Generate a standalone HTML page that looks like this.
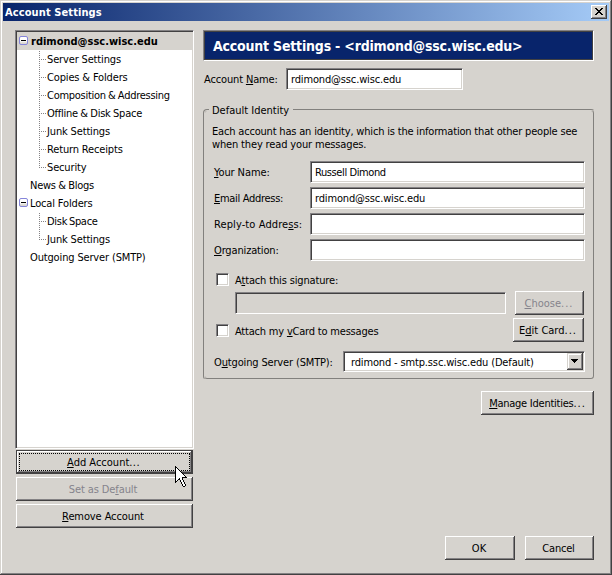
<!DOCTYPE html>
<html>
<head>
<meta charset="utf-8">
<title>Account Settings</title>
<style>
html,body{margin:0;padding:0;}
body{width:612px;height:575px;overflow:hidden;background:#d6d3ce;position:relative;
 font-family:"DejaVu Sans Condensed","Liberation Sans",sans-serif;font-size:11px;line-height:13px;color:#000;cursor:default;}
.abs,.t,.btn,.inp,.row{position:absolute;}
.t{white-space:nowrap;height:13px;letter-spacing:-0.15px;}
.b{font-family:"DejaVu Sans Condensed","Liberation Sans",sans-serif;font-weight:bold;letter-spacing:0;}
u{text-decoration:underline;text-underline-offset:1px;text-decoration-thickness:1px;}
#frame{left:0;top:0;width:612px;height:575px;box-sizing:border-box;
 box-shadow:inset -1px -1px #424142, inset 1px 1px #d6d3ce, inset -2px -2px #848284, inset 2px 2px #fff;}
#titlebar{left:3px;top:3px;width:606px;height:18px;background:linear-gradient(to right,#08246b 0%,#a5cbf7 100%);}
#titletext{left:5px;top:6px;color:#fff;letter-spacing:0.1px;}
.btn{background:#d6d3ce;box-sizing:border-box;text-align:center;white-space:nowrap;
 box-shadow:inset -1px -1px #424142, inset 1px 1px #fff, inset -2px -2px #848284, inset 2px 2px #d6d3ce;letter-spacing:0;}
.btn i{font-style:normal;letter-spacing:1px;margin-right:-1px;}
.btn span{position:absolute;left:0;right:0;top:6px;height:13px;}
.btn.dis{color:#85838c;}
.btn.sb{box-shadow:inset -1px -1px #424142, inset 1px 1px #d6d3ce, inset -2px -2px #848284, inset 2px 2px #fff;}
.btn.def{border:1px solid #424142;}
.sunk{box-sizing:border-box;border:1px solid;border-color:#848284 #fff #fff #848284;padding:1px;
 box-shadow:inset 1px 1px #424142, inset -1px -1px #d6d3ce;}
.inp{background:#fff;height:22px;}
.inp .t{left:4px;top:4px;}
#tree{left:15px;top:30px;width:179px;height:419px;background:#fff;}
#sel{left:17px;top:32px;width:175px;height:18px;background:#d6d3ce;}
.tw{position:absolute;width:9px;height:9px;box-sizing:border-box;border:1px solid #8585da;border-radius:2px;background:linear-gradient(to bottom,#fff 0,#fff 57%,#e4e2dc 72%,#d8d5ce 100%);}
.tw:after{content:"";position:absolute;left:1px;top:3px;width:5px;height:1px;background:#000;}
.dv{position:absolute;width:1px;background:repeating-linear-gradient(to bottom,#848284 0,#848284 1px,transparent 1px,transparent 2px);}
.dh{position:absolute;height:1px;background:repeating-linear-gradient(to right,#848284 0,#848284 1px,transparent 1px,transparent 2px);}
#banner{left:203px;top:30px;width:391px;height:31px;background:#08246b;box-sizing:border-box;border:1px solid;border-color:#848284 #fff #fff #848284;box-shadow:inset 0 0 0 1px #424142;}
#bannertext{left:213px;top:38px;color:#fff;font-size:14px;line-height:17px;height:17px;letter-spacing:-0.2px;}
#group{left:203px;top:109px;width:392px;height:271px;box-sizing:border-box;border:2px groove #d6d3ce;border-radius:4px;}
.chk{position:absolute;width:13px;height:13px;background:#fff;}
</style>
</head>
<body>
<div id="frame" class="abs"></div>
<div id="titlebar" class="abs"></div>
<div id="titletext" class="t b">Account Settings</div>
<div id="close" class="btn" style="left:591px;top:5px;width:16px;height:14px;">
<svg width="16" height="14" style="position:absolute;left:0;top:0" shape-rendering="crispEdges"><path d="M4 3h2v1h-2zM10 3h2v1h-2zM5 4h2v1h-2zM9 4h2v1h-2zM6 5h4v1h-4zM7 6h2v1h-2zM6 7h4v1h-4zM5 8h2v1h-2zM9 8h2v1h-2zM4 9h2v1h-2zM10 9h2v1h-2z" fill="#000"/></svg>
</div>

<!-- tree -->
<div id="tree" class="abs sunk"></div>
<div id="sel" class="abs"></div>
<div class="tw" style="left:19px;top:36px"></div>
<div class="t b" style="left:31px;top:35px">rdimond@ssc.wisc.edu</div>
<div class="dv" style="left:39px;top:51px;height:117px"></div>
<div class="dh" style="left:39px;top:59px;width:7px"></div>
<div class="dh" style="left:39px;top:77px;width:7px"></div>
<div class="dh" style="left:39px;top:95px;width:7px"></div>
<div class="dh" style="left:39px;top:113px;width:7px"></div>
<div class="dh" style="left:39px;top:131px;width:7px"></div>
<div class="dh" style="left:39px;top:149px;width:7px"></div>
<div class="dh" style="left:39px;top:167px;width:7px"></div>
<div class="t" style="left:47px;top:53px">Server Settings</div>
<div class="t" style="left:47px;top:71px">Copies &amp; Folders</div>
<div class="t" style="left:47px;top:89px;word-spacing:-0.6px;letter-spacing:-0.27px">Composition &amp; Addressing</div>
<div class="t" style="left:47px;top:107px;word-spacing:-0.4px;letter-spacing:-0.25px">Offline &amp; Disk Space</div>
<div class="t" style="left:47px;top:125px">Junk Settings</div>
<div class="t" style="left:47px;top:143px">Return Receipts</div>
<div class="t" style="left:47px;top:161px">Security</div>
<div class="t" style="left:30px;top:179px;word-spacing:-0.4px;letter-spacing:-0.25px">News &amp; Blogs</div>
<div class="tw" style="left:19px;top:198px"></div>
<div class="t" style="left:30px;top:197px">Local Folders</div>
<div class="dv" style="left:39px;top:213px;height:27px"></div>
<div class="dh" style="left:39px;top:221px;width:7px"></div>
<div class="dh" style="left:39px;top:239px;width:7px"></div>
<div class="t" style="left:47px;top:215px;word-spacing:-1px;letter-spacing:-0.3px">Disk Space</div>
<div class="t" style="left:47px;top:233px">Junk Settings</div>
<div class="t" style="left:30px;top:251px">Outgoing Server (SMTP)</div>

<div class="btn def" style="left:16px;top:450px;width:177px;height:24px;"><span style="top:5px;left:-3px"><u>A</u>dd Account<i style="letter-spacing:0.4px">...</i></span>
<div class="abs" style="left:2px;top:2px;width:169px;height:16px;border:1px dotted #000;"></div></div>
<div class="btn dis" style="left:16px;top:477px;width:177px;height:24px;"><span style="letter-spacing:-0.1px;left:-3px">Set as De<u>f</u>ault</span></div>
<div class="btn" style="left:16px;top:504px;width:177px;height:24px;"><span style="letter-spacing:-0.1px;left:-3px"><u>R</u>emove Account</span></div>

<!-- right pane -->
<div id="banner" class="abs"></div>
<div id="bannertext" class="t b">Account Settings - &lt;rdimond@ssc.wisc.edu&gt;</div>

<div class="t" style="left:204px;top:73px">Account <u>N</u>ame:</div>
<div class="inp sunk" style="left:286px;top:68px;width:177px;"><div class="t">rdimond@ssc.wisc.edu</div></div>

<div id="group" class="abs"></div>
<div class="t" style="left:209px;top:104px;background:#d6d3ce;padding:0 4px 0 3px;letter-spacing:0">Default Identity</div>
<div class="t" style="left:212px;top:125px;letter-spacing:-0.185px">Each account has an identity, which is the information that other people see</div>
<div class="t" style="left:212px;top:138px">when they read your messages.</div>

<div class="t" style="left:214px;top:166px;letter-spacing:-0.1px"><u>Y</u>our Name:</div>
<div class="inp sunk" style="left:310px;top:161px;width:275px;"><div class="t" style="letter-spacing:-0.4px">Russell Dimond</div></div>
<div class="t" style="left:214px;top:192px;letter-spacing:-0.3px"><u>E</u>mail Address:</div>
<div class="inp sunk" style="left:310px;top:187px;width:275px;"><div class="t">rdimond@ssc.wisc.edu</div></div>
<div class="t" style="left:214px;top:218px;letter-spacing:0.1px">Reply-to Addre<u>s</u>s:</div>
<div class="inp sunk" style="left:310px;top:213px;width:275px;"></div>
<div class="t" style="left:214px;top:244px"><u>O</u>rganization:</div>
<div class="inp sunk" style="left:310px;top:239px;width:275px;"></div>

<div class="chk sunk" style="left:216px;top:273px"></div>
<div class="t" style="left:235px;top:274px">A<u>t</u>tach this signature:</div>
<div class="inp sunk" style="left:235px;top:292px;width:271px;background:#d6d3ce;"></div>
<div class="btn dis" style="left:515px;top:291px;width:69px;height:24px;"><span style="left:-2px"><u>C</u>hoose<i>...</i></span></div>

<div class="chk sunk" style="left:216px;top:324px"></div>
<div class="t" style="left:235px;top:325px;letter-spacing:-0.2px">Attach my <u>v</u>Card to messages</div>
<div class="btn" style="left:513px;top:318px;width:71px;height:24px;"><span style="left:-2px">E<u>d</u>it Card<i>...</i></span></div>

<div class="t" style="left:214px;top:356px">O<u>u</u>tgoing Server (SMTP):</div>
<div class="inp sunk" style="left:343px;top:351px;width:242px;height:21px;"><div class="t" style="left:7px;top:4px">rdimond - smtp.ssc.wisc.edu (Default)</div>
<div class="btn sb" style="left:223px;top:1px;width:16px;height:17px;"><svg width="16" height="17" style="position:absolute;left:0;top:0" shape-rendering="crispEdges"><path d="M4 6h7v1h-7zM5 7h5v1h-5zM6 8h3v1h-3zM7 9h1v1h-1z" fill="#000"/></svg></div></div>

<div class="btn" style="left:481px;top:391px;width:113px;height:24px;"><span style="letter-spacing:-0.25px;left:-1px"><u>M</u>anage Identities<i>...</i></span></div>

<div class="btn" style="left:445px;top:536px;width:70px;height:24px;"><span style="left:-2px">OK</span></div>
<div class="btn" style="left:525px;top:536px;width:69px;height:24px;"><span style="left:-2px;letter-spacing:-0.2px">Cancel</span></div>

<!-- cursor -->
<svg class="abs" style="left:175px;top:466px" width="12" height="21" viewBox="0 0 12 21" shape-rendering="crispEdges"><path d="M1 2h1v1h-1zM1 3h2v1h-2zM1 4h3v1h-3zM1 5h4v1h-4zM1 6h5v1h-5zM1 7h6v1h-6zM1 8h7v1h-7zM1 9h8v1h-8zM1 10h9v1h-9zM1 11h6v1h-6zM1 12h3v1h-3zM5 12h2v1h-2zM1 13h2v1h-2zM5 13h2v1h-2zM1 14h1v1h-1zM6 14h2v1h-2zM6 15h2v1h-2zM7 16h2v1h-2zM7 17h2v1h-2zM8 18h2v1h-2zM8 19h2v1h-2z" fill="#fff"/><path d="M0 0h1v1h-1zM0 1h2v1h-2zM0 2h1v1h-1zM2 2h1v1h-1zM0 3h1v1h-1zM3 3h1v1h-1zM0 4h1v1h-1zM4 4h1v1h-1zM0 5h1v1h-1zM5 5h1v1h-1zM0 6h1v1h-1zM6 6h1v1h-1zM0 7h1v1h-1zM7 7h1v1h-1zM0 8h1v1h-1zM8 8h1v1h-1zM0 9h1v1h-1zM9 9h1v1h-1zM0 10h1v1h-1zM10 10h1v1h-1zM0 11h1v1h-1zM7 11h5v1h-5zM0 12h1v1h-1zM4 12h1v1h-1zM7 12h1v1h-1zM0 13h1v1h-1zM3 13h2v1h-2zM7 13h1v1h-1zM0 14h1v1h-1zM2 14h1v1h-1zM5 14h1v1h-1zM8 14h1v1h-1zM0 15h2v1h-2zM5 15h1v1h-1zM8 15h1v1h-1zM0 16h1v1h-1zM6 16h1v1h-1zM9 16h1v1h-1zM6 17h1v1h-1zM9 17h1v1h-1zM7 18h1v1h-1zM10 18h1v1h-1zM7 19h1v1h-1zM10 19h1v1h-1zM8 20h2v1h-2z" fill="#000"/></svg>
</body>
</html>
